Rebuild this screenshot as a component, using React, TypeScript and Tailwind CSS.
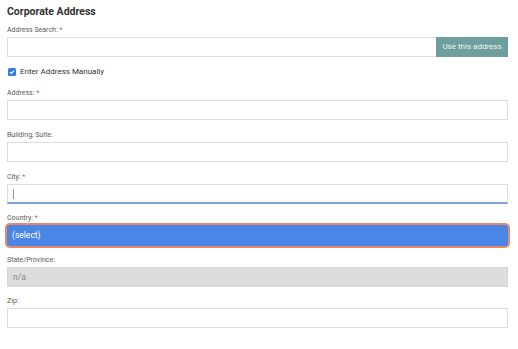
import React from "react";

function Label({ text, required }: { text: string; required?: boolean }) {
  return (
    <div className="h-[9px] text-[7px] leading-[9px] text-[#5a5a5a] mb-[2px]">
      {text}
      {required && <span className="text-[#d9534f]"> *</span>}
    </div>
  );
}

export default function App() {
  return (
    <div
      className="w-[518px] h-[349px] bg-white pl-[7px] pr-[10px] pt-[5px]"
      style={{ fontFamily: "Roboto, 'Liberation Sans', sans-serif" }}
    >
      <div className="text-[10.5px] leading-[14px] font-bold text-[#333333]">Corporate Address</div>

      <div className="mt-[7px]">
        <Label text="Address Search:" required />
        <div className="flex h-[20px]">
          <div className="flex-1 border border-[#dddddd] border-r-0 bg-white" />
          <button className="w-[72px] h-full bg-[#6f9f9c] text-[8px] text-white/90 flex items-center justify-center">
            Use this address
          </button>
        </div>
      </div>

      <div className="mt-[8px] flex items-center h-[14px]">
        <div className="w-[8px] h-[8px] ml-[1px] rounded-[1.5px] bg-[#2f7fe0] flex items-center justify-center">
          <svg width="6" height="6" viewBox="0 0 6 6">
            <path d="M1 3.2 L2.4 4.5 L5 1.6" stroke="white" strokeWidth="1.2" fill="none" />
          </svg>
        </div>
        <span className="ml-[4px] text-[8px] text-[#333333]">Enter Address Manually</span>
      </div>

      <div className="mt-[10px]">
        <Label text="Address:" required />
        <div className="h-[20px] border border-[#dddddd]" />
      </div>

      <div className="mt-[11px]">
        <Label text="Building, Suite:" />
        <div className="h-[20px] border border-[#dddddd]" />
      </div>

      <div className="mt-[11px]">
        <Label text="City:" required />
        <div className="h-[20px] border border-[#dddddd] border-b-2 border-b-[#7ea1de] flex items-center pl-[5px]">
          <div className="w-[1px] h-[10px] bg-[#8a9bb8]" />
        </div>
      </div>

      <div className="mt-[10px]">
        <Label text="Country:" required />
        <div className="h-[21px] rounded-[3px] bg-[#4a86e8] ring-2 ring-[#ea8866] flex items-center pl-[5px] text-[8.5px] text-white">
          (select)
        </div>
      </div>

      <div className="mt-[10px]">
        <Label text="State/Province:" />
        <div className="h-[20px] bg-[#dddddd] border border-[#d6d6d6] flex items-center pl-[5px] text-[8.5px] text-[#888888]">
          n/a
        </div>
      </div>

      <div className="mt-[10px]">
        <Label text="Zip:" />
        <div className="h-[20px] border border-[#dddddd]" />
      </div>
    </div>
  );
}
